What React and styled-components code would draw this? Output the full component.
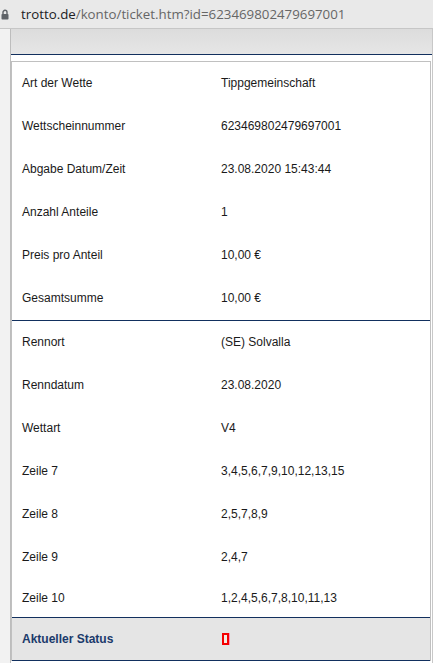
import React from "react";
import styled, { createGlobalStyle } from "styled-components";

const Global = createGlobalStyle`
  html, body { margin: 0; padding: 0; background: #f2f2f2; }
  body { font-family: "Liberation Sans", Arial, sans-serif; }
  #root { width: 433px; height: 663px; overflow: hidden; }
`;

const AddressBar = styled.div`
  height: 29px;
  box-sizing: border-box;
  border-bottom: 1px solid #c6c6c6;
  background: #e9e9e9;
  display: flex;
  align-items: center;
  gap: 12px;
  padding-left: 1px;
  font-family: "Open Sans", "Noto Sans", sans-serif;
  font-size: 13.3px;
  line-height: 16px;
`;

const Url = styled.span`
  color: #666;
  white-space: nowrap;
`;

const Host = styled.span`
  color: #202124;
`;

const Page = styled.div`
  display: flex;
  height: 634px;
`;

const Gutter = styled.div`
  width: 10px;
  flex: none;
  background: #f2f2f2;
`;

const Frame = styled.div`
  flex: 1;
  background: #fff;
  border-left: 1px solid #bdbdbd;
  border-right: 1px solid #c8c8c8;
  display: flex;
  flex-direction: column;
`;

const HeaderStrip = styled.div`
  height: 25px;
  flex: none;
  background: linear-gradient(180deg, #dcdcdc 0%, #e6e6e6 100%);
  border-bottom: 1px solid #12305e;
`;

const Box = styled.div`
  margin-top: 6px;
  margin-right: 1px;
  border: 1px solid #c0c0c0;
  border-bottom: none;
`;

const Section = styled.div`
  & + & {
    border-top: 1px solid #12305e;
  }
`;

const Row = styled.div`
  display: grid;
  grid-template-columns: 199px 1fr;
  align-items: center;
  height: ${(p) => (p.$short ? 38 : 43)}px;
  padding: 0 10px ${(p) => (p.$short ? 0 : 2)}px 10px;
  box-sizing: border-box;
  font-size: 12px;
  line-height: 14px;
  color: #1a1a1a;
`;

const StatusRow = styled.div`
  display: grid;
  grid-template-columns: 199px 1fr;
  align-items: center;
  height: 44px;
  box-sizing: border-box;
  padding: 0 10px 1px 10px;
  background: #e5e5e5;
  border-top: 1px solid #12305e;
  border-bottom: 1px solid #12305e;
  font-size: 12px;
  line-height: 14px;
`;

const StatusLabel = styled.span`
  font-weight: bold;
  color: #1b3a6b;
`;

const StatusMark = styled.span`
  display: block;
  width: 3px;
  height: 8px;
  margin-left: 1px;
  border: 2px solid #f40000;
  background: #f3ebe3;
  box-shadow: 1px 0 0 #ff8fc0;
`;

const Lock = () => (
  <svg width="8" height="11" viewBox="0 0 8 11" style={{ flex: "none" }}>
    <path d="M2 5V3.3a2 2 0 0 1 4 0V5" fill="none" stroke="#5f6368" strokeWidth="1.4" />
    <rect x="0.5" y="5" width="7" height="5.5" rx="0.8" fill="#5f6368" />
  </svg>
);

const first = [
  ["Art der Wette", "Tippgemeinschaft"],
  ["Wettscheinnummer", "623469802479697001"],
  ["Abgabe Datum/Zeit", "23.08.2020 15:43:44"],
  ["Anzahl Anteile", "1"],
  ["Preis pro Anteil", "10,00 €"],
  ["Gesamtsumme", "10,00 €"],
];

const second = [
  ["Rennort", "(SE) Solvalla"],
  ["Renndatum", "23.08.2020"],
  ["Wettart", "V4"],
  ["Zeile 7", "3,4,5,6,7,9,10,12,13,15"],
  ["Zeile 8", "2,5,7,8,9"],
  ["Zeile 9", "2,4,7"],
  ["Zeile 10", "1,2,4,5,6,7,8,10,11,13"],
];

export default function App() {
  return (
    <>
      <Global />
      <AddressBar>
        <Lock />
        <Url>
          <Host>trotto.de</Host>/konto/ticket.htm?id=623469802479697001
        </Url>
      </AddressBar>
      <Page>
        <Gutter />
        <Frame>
          <HeaderStrip />
          <Box>
            <Section>
              {first.map(([k, v]) => (
                <Row key={k}>
                  <span>{k}</span>
                  <span>{v}</span>
                </Row>
              ))}
            </Section>
            <Section>
              {second.map(([k, v], i) => (
                <Row key={k} $short={i === second.length - 1}>
                  <span>{k}</span>
                  <span>{v}</span>
                </Row>
              ))}
            </Section>
            <StatusRow>
              <StatusLabel>Aktueller Status</StatusLabel>
              <span>
                <StatusMark />
              </span>
            </StatusRow>
          </Box>
        </Frame>
      </Page>
    </>
  );
}
